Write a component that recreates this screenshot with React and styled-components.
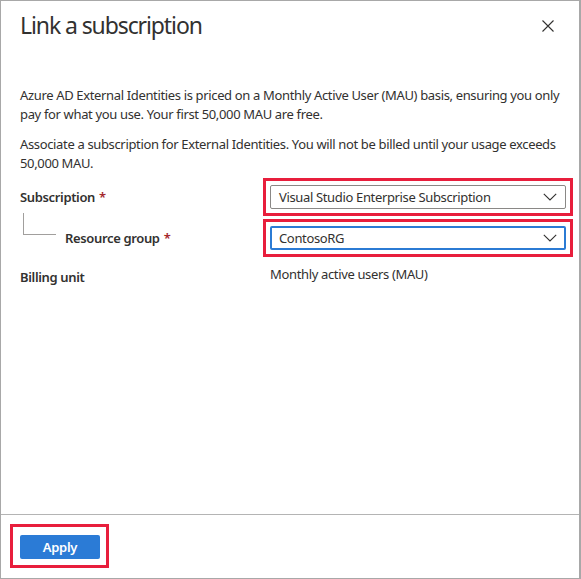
import React from "react";
import styled, { createGlobalStyle } from "styled-components";

const GlobalStyle = createGlobalStyle`
  html, body {
    margin: 0;
    padding: 0;
    background: #ffffff;
  }
  body {
    font-family: "Segoe UI", "Noto Sans", "Liberation Sans", sans-serif;
    color: #323130;
    letter-spacing: -0.35px;
  }
`;

const Panel = styled.div`
  box-sizing: border-box;
  width: 581px;
  height: 579px;
  border: 1px solid #a8a8a8;
  border-right-width: 2px;
  display: flex;
  flex-direction: column;
  background: #fff;
`;

const Header = styled.div`
  display: flex;
  align-items: flex-start;
  justify-content: space-between;
  padding: 8px 20px 0 19px;
`;

const Title = styled.h1`
  margin: 0;
  font-size: 23px;
  font-weight: 400;
  line-height: 32px;
  color: #323130;
  letter-spacing: -1.1px;
`;

const CloseButton = styled.button`
  border: none;
  background: transparent;
  padding: 0;
  margin: 10px 4px 0 0;
  width: 14px;
  height: 14px;
  display: flex;
  align-items: center;
  justify-content: center;
  cursor: pointer;
  color: #323130;
`;

const Body = styled.div`
  flex: 1;
  padding: 45px 6px 0 19px;
`;

const Paragraph = styled.p`
  margin: 0 0 ${(p) => p.$gap || 0}px 0;
  max-width: 545px;
  font-size: 13px;
  line-height: 19px;
  color: #323130;
`;

const Form = styled.div`
  margin-top: 5px;
  display: flex;
  flex-direction: column;
  gap: 3px;
`;

const Row = styled.div`
  display: flex;
  align-items: center;
  min-height: ${(p) => p.$h || 37}px;
`;

const Label = styled.div`
  position: relative;
  width: 243px;
  box-sizing: border-box;
  padding-left: ${(p) => (p.$indent ? 45 : 0)}px;
  padding-top: ${(p) => p.$down || 0}px;
  font-size: 13px;
  line-height: 19px;
  font-weight: 600;
  color: #323130;

  ${(p) =>
    p.$indent &&
    `
    &::before {
      content: "";
      position: absolute;
      left: 3px;
      top: -16px;
      width: 32px;
      height: 21px;
      border-left: 1px solid #a19f9d;
      border-bottom: 1px solid #a19f9d;
    }
  `}
`;

const Required = styled.span`
  color: #a4262c;
  margin-left: 4px;
`;

const Highlight = styled.div`
  flex: 1;
  border: 3px solid #e81e3c;
  padding: 4px;
  box-sizing: border-box;
`;

const Select = styled.div`
  box-sizing: border-box;
  height: 24px;
  display: flex;
  align-items: center;
  justify-content: space-between;
  border: ${(p) => (p.$focused ? "2px solid #2b7bd4" : "1px solid #8a8886")};
  border-radius: 2px;
  padding: 0 ${(p) => (p.$focused ? 7 : 8)}px 0 ${(p) => (p.$focused ? 7 : 8)}px;
  font-size: 13px;
  color: #323130;
  background: #fff;
`;

const Value = styled.div`
  font-size: 13px;
  color: #323130;
  padding-left: 7px;
`;

const Footer = styled.div`
  border-top: 1px solid #b4b4b4;
  padding: 9px 10px 10px 9px;
  height: 64px;
  box-sizing: border-box;
`;

const ApplyButton = styled.button`
  box-sizing: border-box;
  width: 80px;
  height: 24px;
  border: none;
  border-radius: 2px;
  background: #2b7bd6;
  color: #fff;
  font-family: inherit;
  font-size: 13px;
  font-weight: 600;
  letter-spacing: -0.3px;
  cursor: pointer;
  padding: 0;
`;

const ButtonHighlight = styled.div`
  display: inline-block;
  border: 3px solid #e81e3c;
  padding: 8px 6px 6px 7px;
`;

const Chevron = () => (
  <svg width="14" height="8" viewBox="0 0 14 8" fill="none">
    <path d="M0.8 0.8 L7 7 L13.2 0.8" stroke="#323130" strokeWidth="1.1" />
  </svg>
);

const CloseIcon = () => (
  <svg width="12" height="12" viewBox="0 0 12 12" fill="none">
    <path d="M0.5 0.5 L11.5 11.5 M11.5 0.5 L0.5 11.5" stroke="#323130" strokeWidth="1.1" />
  </svg>
);

export default function App() {
  return (
    <>
      <GlobalStyle />
      <Panel>
        <Header>
          <Title>Link a subscription</Title>
          <CloseButton aria-label="Close">
            <CloseIcon />
          </CloseButton>
        </Header>
        <Body>
          <Paragraph $gap={11}>
            Azure AD External Identities is priced on a Monthly Active User (MAU) basis, ensuring you only
            pay for what you use. Your first 50,000 MAU are free.
          </Paragraph>
          <Paragraph>
            Associate a subscription for External Identities. You will not be billed until your usage exceeds
            50,000 MAU.
          </Paragraph>
          <Form>
            <Row>
              <Label>
                Subscription<Required>*</Required>
              </Label>
              <Highlight>
                <Select>
                  <span>Visual Studio Enterprise Subscription</span>
                  <Chevron />
                </Select>
              </Highlight>
            </Row>
            <Row>
              <Label $indent>
                Resource group<Required>*</Required>
              </Label>
              <Highlight>
                <Select $focused>
                  <span>ContosoRG</span>
                  <Chevron />
                </Select>
              </Highlight>
            </Row>
            <Row $h={28}>
              <Label $down={6}>Billing unit</Label>
              <Value>Monthly active users (MAU)</Value>
            </Row>
          </Form>
        </Body>
        <Footer>
          <ButtonHighlight>
            <ApplyButton>Apply</ApplyButton>
          </ButtonHighlight>
        </Footer>
      </Panel>
    </>
  );
}
